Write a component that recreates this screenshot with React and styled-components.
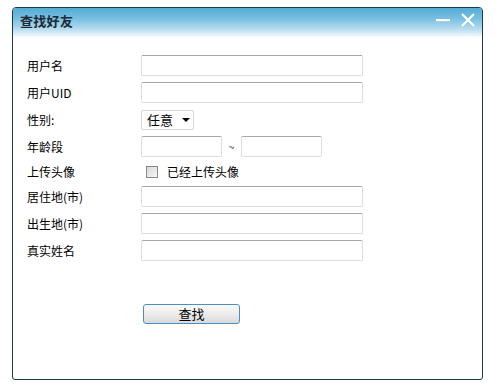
import React from "react";
import styled, { createGlobalStyle } from "styled-components";

const Global = createGlobalStyle`
  html, body { margin: 0; padding: 0; background: #fff; }
  body { font-family: "Noto Sans CJK SC", "Noto Sans", sans-serif; font-size: 12px; color: #000; }
`;

const Window = styled.div`
  margin: 7px 0 0 12px;
  width: 469px;
  height: 371px;
  border: 1px solid #1b3a4e;
  border-radius: 4px 4px 3px 3px;
  overflow: hidden;
  display: flex;
  flex-direction: column;
`;

const TitleBar = styled.div`
  height: 30px;
  flex: none;
  display: flex;
  align-items: center;
  padding: 0 6px 0 7px;
  background: linear-gradient(to bottom, #55acd6 0%, #78bfe1 35%, #b6dcef 70%, #ffffff 100%);
`;

const Title = styled.div`
  font-size: 13px;
  font-weight: bold;
  color: #1c2a35;
  letter-spacing: 0.3px;
  margin-top: -6px;
  flex: 1;
`;

const Controls = styled.div`
  display: flex;
  align-items: center;
  gap: 11px;
  margin-top: -7px;
  margin-right: 1px;
`;

const Form = styled.div`
  display: grid;
  grid-template-columns: 114px 1fr;
  row-gap: 6px;
  padding: 17px 0 0 14px;
  align-items: center;
`;

const Label = styled.div`
  font-size: 12px;
  line-height: 21px;
  height: ${(p) => p.$h || 21}px;
  display: flex;
  align-items: center;
`;

const Cell = styled.div`
  display: flex;
  align-items: center;
  height: ${(p) => p.$h || 21}px;
`;

const Input = styled.div`
  box-sizing: border-box;
  width: ${(p) => p.$w}px;
  height: 21px;
  border: 1px solid #dcdcdc;
  border-top-color: #a8a8a8;
  border-radius: 2px;
  background: #fff;
`;

const Select = styled.div`
  box-sizing: border-box;
  width: 53px;
  height: 20px;
  border: 1px solid #d4d4d4;
  border-radius: 2px;
  display: flex;
  align-items: center;
  padding-left: 5px;
  gap: 9px;
  font-size: 13px;
`;

const Arrow = styled.span`
  width: 0;
  height: 0;
  border-left: 4px solid transparent;
  border-right: 4px solid transparent;
  border-top: 4px solid #000;
  margin-top: 1px;
`;

const Tilde = styled.span`
  width: 19px;
  text-align: center;
  font-size: 10px;
  color: #333;
`;

const Check = styled.span`
  box-sizing: border-box;
  width: 12px;
  height: 12px;
  border: 1px solid #8a8a8a;
  background: linear-gradient(135deg, #d8d8d8, #f6f6f6);
  margin-left: 5px;
  margin-right: 9px;
`;

const CheckText = styled.span`
  font-size: 12px;
`;

const ButtonRow = styled.div`
  padding: 43px 0 0 130px;
`;

const Button = styled.button`
  box-sizing: border-box;
  width: 97px;
  height: 20px;
  border: 1px solid #4b8fc0;
  border-radius: 3px;
  background: linear-gradient(to bottom, #fafafa 0%, #ececec 50%, #dadada 100%);
  font-family: "Noto Sans CJK SC", sans-serif;
  font-size: 13px;
  padding: 0;
  line-height: 18px;
  color: #000;
`;

function Minimize() {
  return (
    <svg width="14" height="14" viewBox="0 0 14 14">
      <rect x="0" y="6" width="14" height="2.2" fill="#fff" />
    </svg>
  );
}

function Close() {
  return (
    <svg width="14" height="14" viewBox="0 0 14 14">
      <path d="M1 1 L13 13 M13 1 L1 13" stroke="#fff" strokeWidth="2.2" />
    </svg>
  );
}

const textRows = [
  ["用户名", 222],
  ["用户UID", 222],
];

const lowerRows = ["居住地(市)", "出生地(市)", "真实姓名"];

export default function App() {
  return (
    <>
      <Global />
      <Window>
        <TitleBar>
          <Title>查找好友</Title>
          <Controls>
            <Minimize />
            <Close />
          </Controls>
        </TitleBar>
        <Form>
          {textRows.map(([l, w]) => (
            <React.Fragment key={l}>
              <Label>{l}</Label>
              <Cell>
                <Input $w={w} />
              </Cell>
            </React.Fragment>
          ))}
          <Label>性别:</Label>
          <Cell>
            <Select>
              任意
              <Arrow />
            </Select>
          </Cell>
          <Label>年龄段</Label>
          <Cell>
            <Input $w={81} />
            <Tilde>~</Tilde>
            <Input $w={81} />
          </Cell>
          <Label $h={17}>上传头像</Label>
          <Cell $h={17}>
            <Check />
            <CheckText>已经上传头像</CheckText>
          </Cell>
          {lowerRows.map((l) => (
            <React.Fragment key={l}>
              <Label>{l}</Label>
              <Cell>
                <Input $w={222} />
              </Cell>
            </React.Fragment>
          ))}
        </Form>
        <ButtonRow>
          <Button>查找</Button>
        </ButtonRow>
      </Window>
    </>
  );
}
